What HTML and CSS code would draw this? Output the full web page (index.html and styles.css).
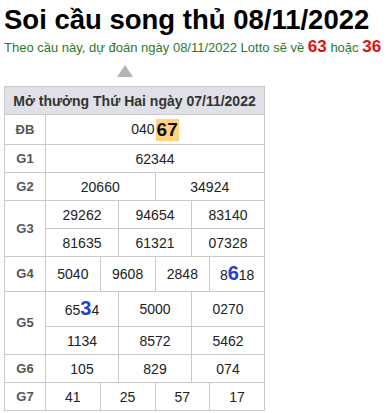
FILE: index.html
```html
<!DOCTYPE html>
<html lang="vi">
<head>
    <meta charset="UTF-8">
    <meta name="viewport" content="width=device-width, initial-scale=1.0">
    <title>Soi cầu song thủ</title>
    <link rel="stylesheet" href="styles.css">
</head>
<body>
    <h1 class="title">Soi cầu song thủ 08/11/2022</h1>
    <p class="predict">Theo cầu này, dự đoán ngày 08/11/2022 Lotto sẽ về <b class="hot">63</b> hoặc <b class="hot">36</b></p>

    <div class="arrow"></div>

    <table class="result">
        <colgroup>
            <col class="col-label">
            <col><col><col><col><col><col><col><col><col><col><col><col>
        </colgroup>
        <tr>
            <th colspan="13" class="result-head">Mở thưởng Thứ Hai ngày 07/11/2022</th>
        </tr>
        <tr class="row-db">
            <td class="label">ĐB</td>
            <td colspan="12">040<span class="mark">67</span></td>
        </tr>
        <tr>
            <td class="label">G1</td>
            <td colspan="12">62344</td>
        </tr>
        <tr>
            <td class="label">G2</td>
            <td colspan="6">20660</td>
            <td colspan="6">34924</td>
        </tr>
        <tr>
            <td class="label" rowspan="2">G3</td>
            <td colspan="4">29262</td>
            <td colspan="4">94654</td>
            <td colspan="4">83140</td>
        </tr>
        <tr>
            <td colspan="4">81635</td>
            <td colspan="4">61321</td>
            <td colspan="4">07328</td>
        </tr>
        <tr class="row-tall">
            <td class="label">G4</td>
            <td colspan="3">5040</td>
            <td colspan="3">9608</td>
            <td colspan="3">2848</td>
            <td colspan="3">8<span class="pick">6</span>18</td>
        </tr>
        <tr class="row-tall">
            <td class="label" rowspan="2">G5</td>
            <td colspan="4">65<span class="pick">3</span>4</td>
            <td colspan="4">5000</td>
            <td colspan="4">0270</td>
        </tr>
        <tr>
            <td colspan="4">1134</td>
            <td colspan="4">8572</td>
            <td colspan="4">5462</td>
        </tr>
        <tr>
            <td class="label">G6</td>
            <td colspan="4">105</td>
            <td colspan="4">829</td>
            <td colspan="4">074</td>
        </tr>
        <tr>
            <td class="label">G7</td>
            <td colspan="3">41</td>
            <td colspan="3">25</td>
            <td colspan="3">57</td>
            <td colspan="3">17</td>
        </tr>
    </table>
</body>
</html>
```

FILE: styles.css
```css
*{
    box-sizing: border-box;
}
body{
    margin: 0 4px;
    font-family: Arial, "Liberation Sans", sans-serif;
    color: #222;
    background: #fff;
}

.title{
    margin: 4px 0 0;
    font-size: 27.5px;
    line-height: 32px;
    font-weight: bold;
    color: #000;
}

.predict{
    margin: 1px 0 0;
    font-size: 13px;
    line-height: 20px;
    color: #2b7a2b;
    white-space: nowrap;
}

.hot{
    color: #e01010;
    font-size: 17px;
}

.arrow{
    width: 0;
    height: 0;
    margin: 7px 0 0 113px;
    border-left: 8px solid transparent;
    border-right: 8px solid transparent;
    border-bottom: 12px solid #b4b4b4;
}

.result{
    margin-top: 9px;
    width: 261px;
    border-collapse: collapse;
    table-layout: fixed;
}

.col-label{
    width: 41px;
}

.result th,
.result td{
    border: 1px solid #c9c9c9;
    padding: 0;
    text-align: center;
    vertical-align: middle;
}

.result-head{
    height: 28px;
    background: #dfe1e6;
    color: #333;
    font-size: 14px;
    font-weight: bold;
}

.result td{
    height: 28px;
    font-size: 14px;
    line-height: 18px;
    color: #222;
}

.result td.label{
    font-size: 13px;
    font-weight: bold;
    color: #555;
}

.row-db td{
    height: 30px;
}

.row-tall td{
    height: 35px;
}

.mark{
    display: inline-block;
    margin-left: 1px;
    padding: 0 1px;
    background: #ffd27f;
    color: #111;
    font-size: 19px;
    font-weight: bold;
    line-height: 22px;
    vertical-align: middle;
}

.pick{
    color: #1f3fd6;
    font-size: 20px;
    font-weight: bold;
}
```
